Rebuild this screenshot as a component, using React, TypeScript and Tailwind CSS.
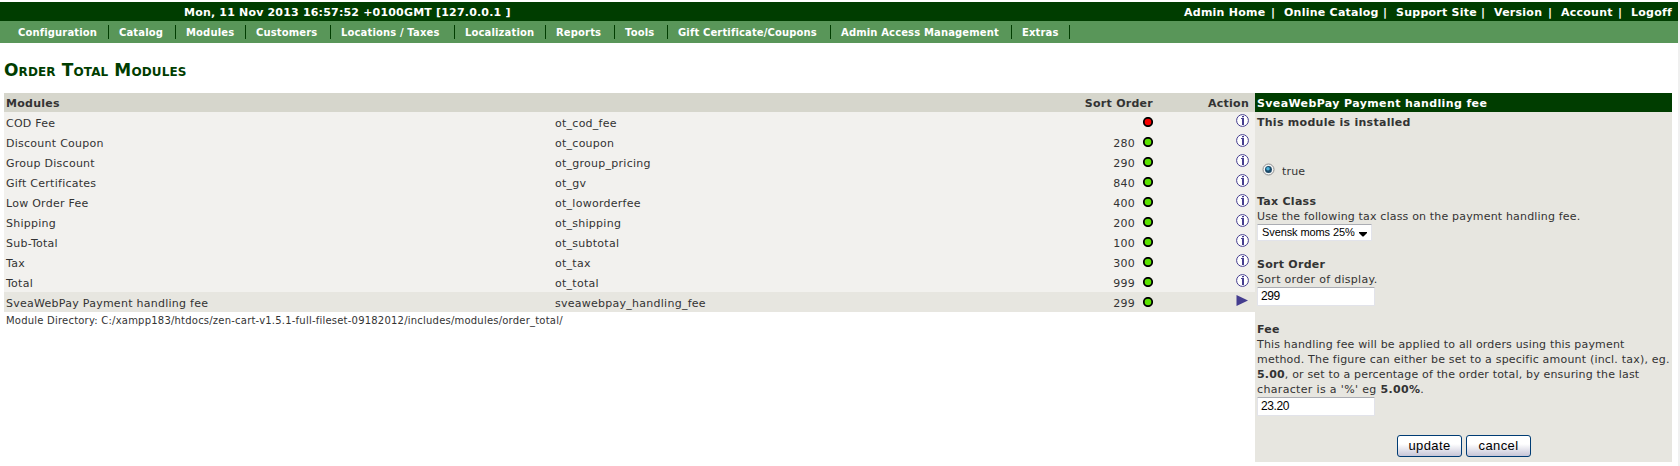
import React from "react";

const NAV: [string, string][] = [
  ["Configuration", "w-[78px]"],
  ["Catalog", "w-[44px]"],
  ["Modules", "w-[47px]"],
  ["Customers", "w-[62px]"],
  ["Locations / Taxes", "w-[101px]"],
  ["Localization", "w-[68px]"],
  ["Reports", "w-[46px]"],
  ["Tools", "w-[30px]"],
  ["Gift Certificate/Coupons", "w-[140px]"],
  ["Admin Access Management", "w-[158px]"],
  ["Extras", "w-[35px]"],
];

const LINKS: [string, string][] = [
  ["Admin Home", "w-[87px]"],
  ["Online Catalog", "w-[99px]"],
  ["Support Site", "w-[85px]"],
  ["Version", "w-[54px]"],
  ["Account", "w-[57px]"],
];

const ROWS: [string, string, string][] = [
  ["COD Fee", "ot_cod_fee", ""],
  ["Discount Coupon", "ot_coupon", "280"],
  ["Group Discount", "ot_group_pricing", "290"],
  ["Gift Certificates", "ot_gv", "840"],
  ["Low Order Fee", "ot_loworderfee", "400"],
  ["Shipping", "ot_shipping", "200"],
  ["Sub-Total", "ot_subtotal", "100"],
  ["Tax", "ot_tax", "300"],
  ["Total", "ot_total", "999"],
  ["SveaWebPay Payment handling fee", "sveawebpay_handling_fee", "299"],
];

function Dot({ on }: { on: boolean }) {
  return (
    <svg width="10" height="10" viewBox="0 0 10 10" className="block">
      <circle cx="5" cy="5" r="5.1" fill="#000" />
      <circle cx="5" cy="5" r="3.3" fill={on ? "#5be300" : "#f80000"} />
    </svg>
  );
}

function Info() {
  return (
    <svg width="13" height="13" viewBox="0 0 13 13" className="block">
      <circle cx="6.5" cy="6.5" r="5.9" fill="#fff" stroke="#453d8f" strokeWidth="1" />
      <path d="M6 2h2v1.3H6zM5 4h3v7H6V5H5z" fill="#453d8f" />
    </svg>
  );
}

function Arrow() {
  return (
    <svg width="12" height="11" viewBox="0 0 12 11" className="block">
      <path d="M.5 0 12 5.5.5 11z" fill="#453d8f" />
    </svg>
  );
}

function Field({ value }: { value: string }) {
  return (
    <div className="flex h-[19px] w-[118px] items-center rounded-[1px] border border-[#e2e3ea] border-t-[#abadb3] bg-white pl-[3px] font-['Liberation_Sans',sans-serif] text-[12px] tracking-[-0.4px] text-black">
      {value}
    </div>
  );
}

function Button({ children }: { children: string }) {
  return (
    <button className="flex h-[22px] w-[65px] items-center justify-center rounded-[3px] border border-[#003c74] bg-linear-to-b from-white from-40% to-[#c6c5d7] pb-px font-['Liberation_Sans',sans-serif] text-[13px] tracking-[0.4px] text-black">
      {children}
    </button>
  );
}

export default function App() {
  return (
    <div className="h-[466px] w-[1680px] border-r-2 border-[#f0f0f0] bg-white pt-[2px] font-['DejaVu_Sans',sans-serif] text-[11px] text-[#333]">
      <header className="flex h-[19px] items-center justify-between bg-[#003d00] pt-[3px] pr-[6px] pl-[184px] font-bold text-white">
        <span className="tracking-[0.19px] whitespace-nowrap">Mon, 11 Nov 2013 16:57:52 +0100GMT [127.0.0.1 ]</span>
        <div className="flex tracking-[0.25px] whitespace-nowrap">
          {LINKS.map(([t, w]) => (
            <div key={t} className="flex">
              <span className={w}>{t}</span>
              <span className="w-[13px]">|</span>
            </div>
          ))}
          <span className="w-[41px]">Logoff</span>
        </div>
      </header>
      <nav className="flex h-[22px] items-center bg-[#599659] pl-[8px] text-[10px] font-bold tracking-[0.14px] text-white">
        {NAV.map(([t, w]) => (
          <div key={t} className="flex h-[14px] items-center border-r border-[#003d00] pr-[12px] pl-[10px]">
            <span className={`${w} whitespace-nowrap`}>{t}</span>
          </div>
        ))}
      </nav>
      <h1 className="flex h-[50px] items-center pt-[6px] pl-[4px] text-[17px] font-bold tracking-[0.12px] text-[#003d00] [font-variant:small-caps]">
        Order Total Modules
      </h1>
      <main className="flex items-start pl-[4px]">
        <section className="w-[1251px] tracking-[0.26px]">
          <div className="flex h-[19px] items-center bg-[#d6d6cc] pt-[3px] pl-[2px] font-bold">
            <span className="flex-1">Modules</span>
            <span className="w-[200px] text-right">Sort Order</span>
            <span className="w-[102px] pr-[6px] text-right">Action</span>
          </div>
          {ROWS.map(([name, code, order], i) => (
            <div key={code} className={`flex h-[20px] pl-[2px] ${i === 9 ? "bg-[#e7e6e0]" : "bg-[#f2f1ee]"}`}>
              <span className="w-[549px] pt-[4px] leading-[16px]">{name}</span>
              <span className="flex-1 pt-[4px] leading-[16px]">{code}</span>
              <span className="w-[60px] pt-[4px] text-right leading-[16px]">{order}</span>
              <span className="w-[26px] pt-[5px] pl-[8px]"><Dot on={i !== 0} /></span>
              <span className={`flex w-[94px] justify-end ${i === 9 ? "pt-[3px] pr-[7px]" : "pt-[2px] pr-[6px]"}`}>
                {i === 9 ? <Arrow /> : <Info />}
              </span>
            </div>
          ))}
          <div className="pt-px pl-[2px] text-[10px] leading-[15px] tracking-[0.215px] whitespace-nowrap">
            Module Directory: C:/xampp183/htdocs/zen-cart-v1.5.1-full-fileset-09182012/includes/modules/order_total/
          </div>
        </section>
        <aside className="h-[369px] w-[417px] bg-[#e7e6e0] leading-[15px] tracking-[0.17px]">
          <div className="flex h-[19px] items-center bg-[#003d00] pt-px pl-[2px] font-bold tracking-[0.38px] text-white">SveaWebPay Payment handling fee</div>
          <div className="pt-[3px] pl-[2px]">
            <div className="font-bold tracking-[0.27px]">This module is installed</div>
            <div className="flex h-[64px] items-end pb-[15px] pl-[5px]">
              <svg width="13" height="13" viewBox="0 0 13 13" className="mb-[3px]">
                <circle cx="6.5" cy="6.5" r="5.5" fill="#f4f4f4" stroke="#8e8f8f" />
                <circle cx="6.5" cy="6.5" r="3.5" fill="#1b4a68" />
                <circle cx="6" cy="5.8" r="1.8" fill="#4fb4dc" />
              </svg>
              <span className="pl-[7px]">true</span>
            </div>
            <div className="font-bold tracking-[0.27px]">Tax Class</div>
            <div>Use the following tax class on the payment handling fee.</div>
            <div className="flex h-[17px] w-[115px] items-center justify-between border border-[#e2e3ea] border-t-[#abadb3] bg-white pr-[4px] pl-[4px] font-['Liberation_Sans',sans-serif] text-[11px] tracking-[-0.1px] text-black">
              Svensk moms 25%
              <svg width="8" height="5" viewBox="0 0 8 5" className="mt-[3px]"><path d="M0 0h8v1L4.5 4.5h-1L0 1z" fill="#000" /></svg>
            </div>
            <div className="pt-[16px] font-bold tracking-[0.27px]">Sort Order</div>
            <div className="tracking-[0.3px]">Sort order of display.</div>
            <Field value="299" />
            <div className="pt-[16px] font-bold tracking-[0.27px]">Fee</div>
            <p className="whitespace-nowrap">
              This handling fee will be applied to all orders using this payment<br />
              <span className="tracking-[0.2px]">method. The figure can either be set to a specific amount (incl. tax), eg.</span><br />
              <b>5.00</b>, or set to a percentage of the order total, by ensuring the last<br />
              <span className="tracking-[0.34px]">character is a '%' eg <b>5.00%</b>.</span>
            </p>
            <Field value="23.20" />
            <div className="flex justify-center gap-[4px] pt-[19px] pr-px">
              <Button>update</Button>
              <Button>cancel</Button>
            </div>
          </div>
        </aside>
      </main>
    </div>
  );
}
